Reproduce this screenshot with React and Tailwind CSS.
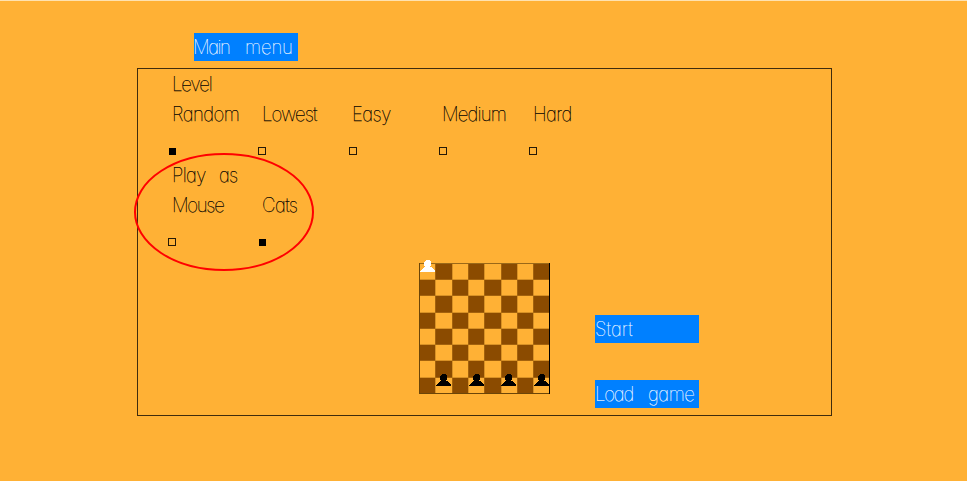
import React from "react";

const levels = [
  { label: "Random", spacing: "tracking-[-0.6px]", checked: true },
  { label: "Lowest", spacing: "tracking-[-0.95px]" },
  { label: "Easy", spacing: "-ml-px tracking-[-0.6px]" },
  { label: "Medium", spacing: "-ml-px tracking-[-0.9px]" },
  { label: "Hard", spacing: "tracking-[-0.6px]" },
];

const sides = [
  { label: "Mouse", spacing: "tracking-[-1.4px]" },
  { label: "Cats", spacing: "tracking-[-0.6px]", checked: true },
];

function Word({ children, className = "" }) {
  return <span className={`inline-block origin-left scale-x-[.93] ${className}`}>{children}</span>;
}

function Box({ checked }) {
  return checked ? (
    <span className="block size-[7px] bg-black" />
  ) : (
    <span className="block size-2 border border-black/85" />
  );
}

function Options({ items }) {
  return (
    <div className="flex">
      {items.map((o) => (
        <div key={o.label} className="w-[90.25px]">
          <div className="h-7 pl-1 leading-7">
            <Word className={o.spacing}>{o.label}</Word>
          </div>
          <div className={`mt-[19px] h-2 ${o.checked ? "pt-px pl-px" : ""}`}>
            <Box checked={o.checked} />
          </div>
        </div>
      ))}
    </div>
  );
}

function Button({ children }) {
  return (
    <button className="block h-7 w-[104px] bg-[#0080ff] text-left leading-7 whitespace-nowrap text-white [-webkit-text-stroke:0.15px_white]">
      {children}
    </button>
  );
}

function Pawn({ x, y, fill }) {
  return (
    <path
      transform={`translate(${x} ${y})`}
      fill={fill}
      d="M6 0h3l2 2v3l-1 2h1l4 4v1H0v-1l4-4h1l-1-2V2z"
    />
  );
}

const edges = [0, 16, 33, 49, 65, 82, 98, 114, 130];
const rows = [0, 17, 33, 50, 66, 82, 98, 115, 131];

function Board() {
  return (
    <svg className="block overflow-visible" width="131" height="131" shapeRendering="crispEdges">
      {rows.slice(0, 8).map((y, r) =>
        edges.slice(0, 8).map((x, c) =>
          (r + c) % 2 ? (
            <rect key={`${r}-${c}`} x={x} y={y} width={edges[c + 1] - x} height={rows[r + 1] - y} fill="#8b4b00" />
          ) : null
        )
      )}
      {edges.slice(1, 8).map((x) => (
        <path key={x} d={`M${x + 0.5} 0V131`} stroke="#b87618" strokeOpacity=".55" />
      ))}
      {rows.slice(1, 8).map((y) => (
        <path key={y} d={`M0 ${y - 0.5}H131`} stroke="#b87618" strokeOpacity=".55" />
      ))}
      <path d="M0 .5H131" stroke="#9a6818" fill="none" />
      <path d="M.5 0V131M0 130.5H131" stroke="#6b4508" fill="none" />
      <path d="M130.5 0V131" stroke="#000" />
      <Pawn x={1} y={-3} fill="#fff" />
      {[17, 50, 82, 115].map((x) => (
        <Pawn key={x} x={x} y={111} fill="#000" />
      ))}
    </svg>
  );
}

export default function App() {
  return (
    <main className="relative h-[481px] w-[967px] overflow-hidden border-t border-[#ffe2b0] bg-[#ffb135] font-['Inter',sans-serif] text-[20px] font-thin text-black [-webkit-text-stroke:0.25px_black] [font-feature-settings:'cv11'_1]">
      <div className="pt-8 pl-[194px]">
        <Button>
          <Word className="-ml-px w-[52px] tracking-[-1.6px]">Main</Word>
          <Word className="tracking-[-0.2px]">menu</Word>
        </Button>
      </div>
      <section className="mt-[7px] ml-[137px] h-[348px] w-[695px] border border-black/75">
        <div className="h-[194px] pt-px pl-[30px]">
          <div className="h-[30px] pl-1 leading-7">
            <Word className="tracking-[-1.2px]">Level</Word>
          </div>
          <Options items={levels} />
          <div className="mt-[6px] h-[30px] pl-1 leading-7">
            <Word className="w-[47px] tracking-[-0.7px]">Play</Word>
            <Word className="tracking-[-0.8px]">as</Word>
          </div>
          <Options items={sides} />
        </div>
        <div className="flex pl-[281px]">
          <Board />
          <div className="ml-[45px] flex flex-col gap-[37px] pt-[52px]">
            <Button>
              <Word className="tracking-[0.1px]">Start</Word>
            </Button>
            <Button>
              <Word className="w-[53px] tracking-[-1.3px]">Load</Word>
              <Word className="tracking-[-0.5px]">game</Word>
            </Button>
          </div>
        </div>
      </section>
      <svg className="pointer-events-none absolute top-[151px] left-[133px]" width="182" height="120">
        <ellipse cx="91" cy="60" rx="89" ry="58" fill="none" stroke="#f00" strokeWidth="2" />
      </svg>
    </main>
  );
}
